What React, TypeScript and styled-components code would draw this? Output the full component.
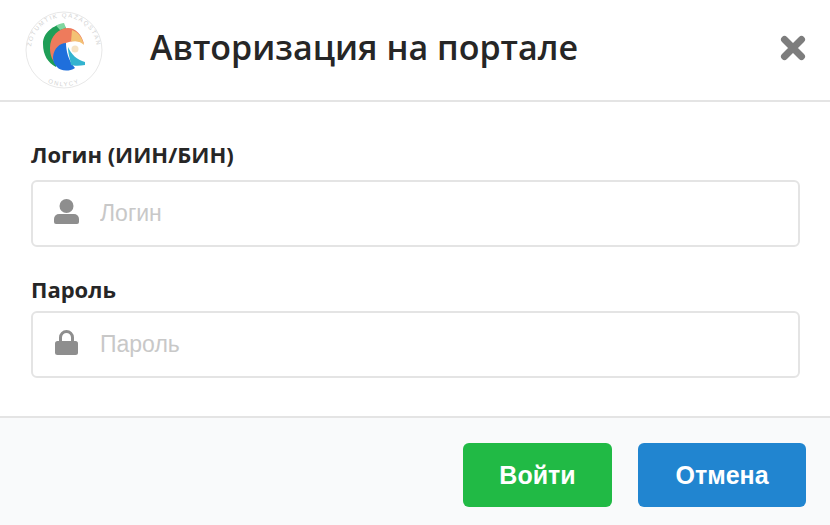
import React from "react";
import styled, { createGlobalStyle } from "styled-components";

const GlobalStyle = createGlobalStyle`
  html, body {
    margin: 0;
    padding: 0;
    background: #fff;
  }
`;

const Modal = styled.div`
  width: 830px;
  height: 525px;
  display: flex;
  flex-direction: column;
  background: #fff;
  font-family: "Open Sans", "Liberation Sans", sans-serif;
  overflow: hidden;
`;

const Header = styled.header`
  height: 102px;
  box-sizing: border-box;
  display: flex;
  align-items: center;
  padding: 0 24px;
  border-bottom: 2px solid #e4e4e4;
`;

const LogoBox = styled.div`
  width: 80px;
  height: 80px;
  flex: none;
`;

const Title = styled.h1`
  margin: -6px 0 0 46px;
  flex: 1;
  font-size: 34px;
  font-weight: 600;
  color: #262626;
`;

const CloseBtn = styled.button`
  border: 0;
  padding: 0;
  background: none;
  display: flex;
  margin: -4px 0 0;
`;

const Body = styled.div`
  flex: 1;
  display: flex;
  flex-direction: column;
  padding: 37px 30px 0 31px;
`;

const Field = styled.div`
  display: flex;
  flex-direction: column;
  margin-bottom: 27px;
`;

const Label = styled.label<{ $gap: number }>`
  font-size: 22px;
  line-height: 30px;
  font-weight: 700;
  color: #262626;
  margin-bottom: ${(p) => p.$gap}px;
`;

const InputWrap = styled.div`
  height: 67px;
  box-sizing: border-box;
  display: flex;
  align-items: center;
  gap: 21px;
  padding: 0 0 0 21px;
  border: 2px solid #e4e4e4;
  border-radius: 6px;
`;

const IconSlot = styled.span`
  display: flex;
  flex: none;
  margin-top: -4px;
`;

const Input = styled.input`
  flex: 1;
  border: 0;
  outline: 0;
  padding: 0;
  background: none;
  font-family: "Liberation Sans", Arial, sans-serif;
  font-size: 23px;
  color: #333;
  &::placeholder {
    color: #c8c8c8;
    opacity: 1;
  }
`;

const Footer = styled.footer`
  height: 109px;
  box-sizing: border-box;
  display: flex;
  justify-content: flex-end;
  gap: 26px;
  padding: 25px 24px 0 0;
  background: #f9fafb;
  border-top: 2px solid #e4e4e4;
`;

const ActionBtn = styled.button<{ $bg: string; $w: number }>`
  width: ${(p) => p.$w}px;
  height: 64px;
  border: 0;
  border-radius: 6px;
  background: ${(p) => p.$bg};
  color: #fff;
  font-family: "Liberation Sans", Arial, sans-serif;
  font-size: 25px;
  font-weight: 700;
`;

function Logo() {
  return (
    <svg width="80" height="80" viewBox="0 0 80 80">
      <defs>
        <path id="ring-top" d="M10 54A33 33 0 1 1 70 54" />
        <path id="ring-bottom" d="M6 52A36 36 0 0 0 74 52" />
      </defs>
      <circle cx="40" cy="40" r="38" fill="none" stroke="#e8e8e8" strokeWidth="1" />
      <text fontFamily="Liberation Sans, sans-serif" fontSize="6" fill="#d2d2d2" letterSpacing="1.500">
        <textPath href="#ring-top" startOffset="50%" textAnchor="middle">ZOTUMTIK  QAZAQSTAN</textPath>
      </text>
      <text fontFamily="Liberation Sans, sans-serif" fontSize="6" fill="#d2d2d2" letterSpacing="1.500">
        <textPath href="#ring-bottom" startOffset="50%" textAnchor="middle">ONLYCY</textPath>
      </text>
      <path d="M39 14C30 15 19 22 19 34C19 45 24 53 32 57L36 40L42 18Z" fill="#1f9e57" />
      <path d="M32 15.500C35 14 38 13 40 13L42 18L36 20Z" fill="#7fd6a0" />
      <path d="M26 38C26 26 35 18 44 18C52 18 58 25 60 34C55 30 50 31 45 32C36 34 32 42 32 54C28 50 26 45 26 38Z" fill="#ee7b5c" />
      <path d="M48 20C54 22 58 27 60 35C56 31 52 31 47 31.500Z" fill="#f3c274" />
      <circle cx="51" cy="39" r="3.500" fill="#f6e3c4" />
      <path d="M29 47C30 38 36 33 42 33C42 40 44 50 51 58C45 62 36 61 33 57C30 54 29 51 29 47Z" fill="#1f6fdc" />
      <path d="M44 37C47 44 53 50 61 52L61 55C56 56 50 56 47 55C46 48 44 44 44 37Z" fill="#33b3cf" />
    </svg>
  );
}

function UserIcon() {
  return (
    <svg width="25" height="25" viewBox="0 0 25 25" fill="#8e8e8e">
      <circle cx="12.500" cy="7" r="7" />
      <path d="M5 15h15a5 5 0 0 1 5 5v3a2 2 0 0 1-2 2H2a2 2 0 0 1-2-2v-3a5 5 0 0 1 5-5z" />
    </svg>
  );
}

function LockIcon() {
  return (
    <svg width="25" height="25" viewBox="0 0 25 25">
      <path d="M6.500 12V7.500a6 6 0 0 1 12 0V12" fill="none" stroke="#8e8e8e" strokeWidth="3" />
      <rect x="1" y="11" width="23" height="14" rx="2.500" fill="#8e8e8e" />
    </svg>
  );
}

function CloseIcon() {
  return (
    <svg width="26" height="26" viewBox="0 0 26 26">
      <path d="M4.500 4.500l17 17M21.500 4.500l-17 17" stroke="#7d7d7d" strokeWidth="7" strokeLinecap="round" />
    </svg>
  );
}

export default function App() {
  return (
    <>
      <GlobalStyle />
      <Modal>
        <Header>
          <LogoBox>
            <Logo />
          </LogoBox>
          <Title>Авторизация на портале</Title>
          <CloseBtn>
            <CloseIcon />
          </CloseBtn>
        </Header>
        <Body>
          <Field>
            <Label $gap={11}>Логин (ИИН/БИН)</Label>
            <InputWrap>
              <IconSlot>
                <UserIcon />
              </IconSlot>
              <Input placeholder="Логин" />
            </InputWrap>
          </Field>
          <Field>
            <Label $gap={7}>Пароль</Label>
            <InputWrap>
              <IconSlot>
                <LockIcon />
              </IconSlot>
              <Input placeholder="Пароль" />
            </InputWrap>
          </Field>
        </Body>
        <Footer>
          <ActionBtn $bg="#21ba45" $w={149}>Войти</ActionBtn>
          <ActionBtn $bg="#2185d0" $w={168}>Отмена</ActionBtn>
        </Footer>
      </Modal>
    </>
  );
}
